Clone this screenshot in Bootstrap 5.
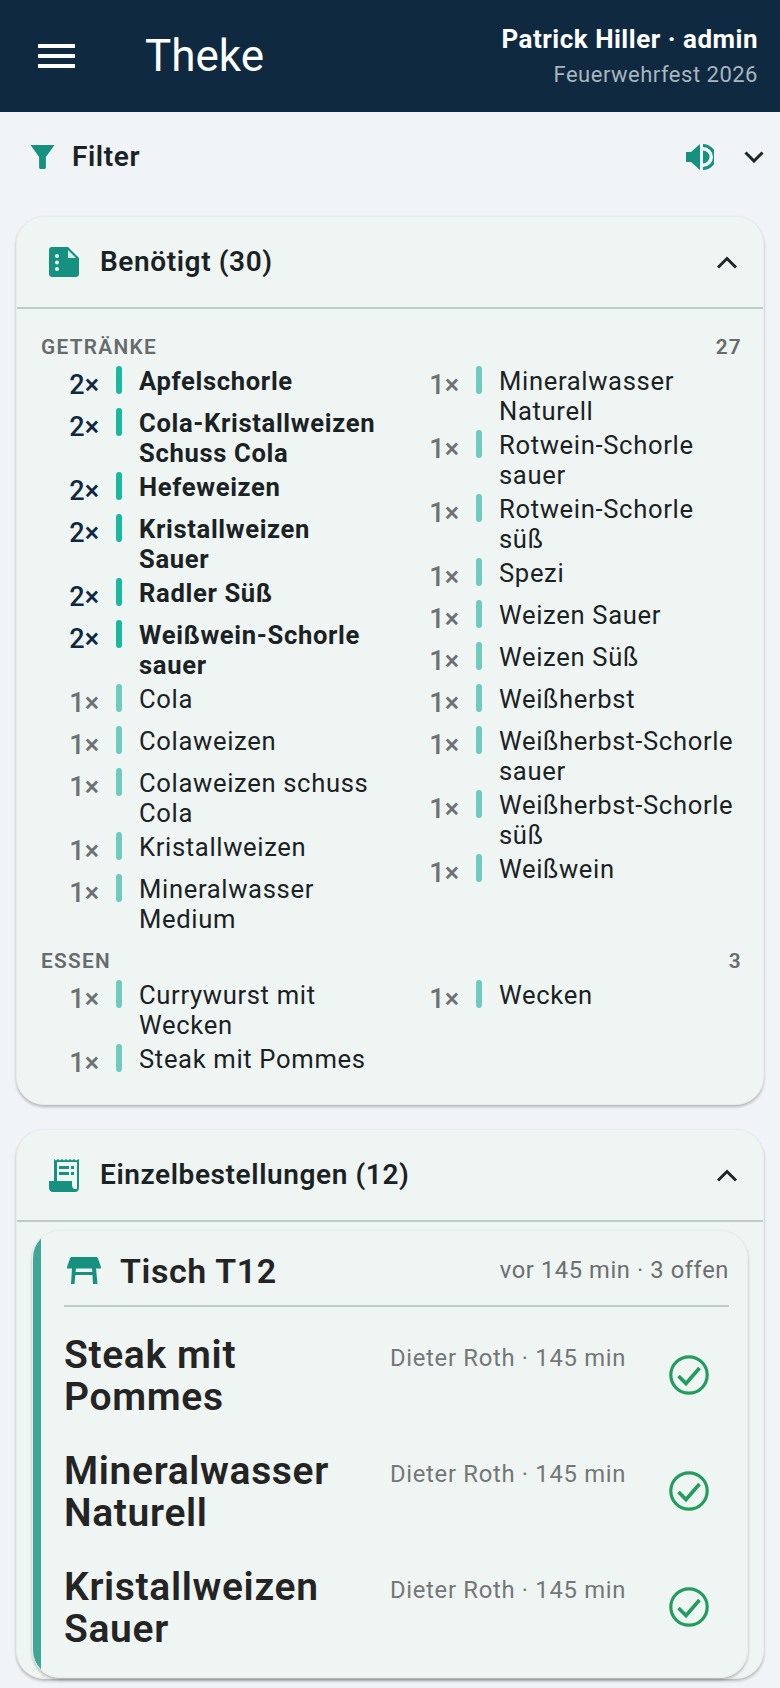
<!DOCTYPE html>
<html lang="de">
<head>
    <meta charset="UTF-8">
    <meta name="viewport" content="width=device-width, initial-scale=1.0">
    <title>Theke</title>
    <link href="https://cdn.jsdelivr.net/npm/bootstrap@5.3.0/dist/css/bootstrap.min.css" rel="stylesheet">
    <style>
        html, body { height: 100%; overflow: hidden; }
        body {
            background-color: #f0f4f7;
            font-family: Roboto, sans-serif;
            color: #1a2224;
            letter-spacing: .66px;
        }
        .app-top { height: 112px; background-color: #0f2a40; color: #fff; padding: 0 22px 0 38px; }
        .burger { width: 37px; height: 24px; }
        .app-title { font-size: 44px; font-weight: 400; margin: 0 0 0 70px; letter-spacing: 0; line-height: 1; }
        .user-name { font-size: 26px; font-weight: 700; line-height: 30px; margin-top: 2px; letter-spacing: .5px; }
        .user-event { font-size: 22px; color: #a9b5bf; line-height: 30px; margin-top: 6px; letter-spacing: .5px; }
        .filter-bar { height: 104px; padding: 0 16px 15px 30px; }
        .filter-text { font-size: 28px; font-weight: 600; margin-left: 17px; letter-spacing: .6px; }
        .panel-box {
            background-color: #eff5f3;
            border: 1px solid #e8edec;
            border-radius: 28px;
            margin: 0 16px 24px;
            box-shadow: 0 2px 3px rgba(0,0,0,.25);
        }
        .panel-head { height: 92px; padding: 0 25px 0 32px; border-bottom: 2px solid #bfcbc7; }
        .panel-title { font-size: 28px; font-weight: 600; margin-left: 21px; letter-spacing: .6px; }
        .panel-body { padding: 27px 21px 6px 24px; }
        .group-label { font-size: 20.8px; font-weight: 600; color: #666b6b; letter-spacing: 1.3px; line-height: 22px; display: flex; justify-content: space-between; margin-bottom: 8px; }
        .order-grid { display: grid; grid-template-columns: 338px 338px; column-gap: 22px; margin-bottom: 12px; }
        .order-line { display: flex; align-items: flex-start; margin-bottom: 4px; min-height: 38px; font-size: 25.6px; line-height: 30px; }
        .order-qty { width: 58px; text-align: right; font-size: 27px; font-weight: 500; color: #6d7173; line-height: 34px; padding-top: 2px; flex-shrink: 0; letter-spacing: 0; }
        .order-bar { width: 6px; height: 28px; border-radius: 3px; background-color: #6fcbbd; margin: 0 17px; flex-shrink: 0; }
        .order-name { width: 240px; }
        .order-line.urgent .order-qty { color: #0f2a40; }
        .order-line.urgent .order-bar { background-color: #1ab8a1; }
        .order-line.urgent .order-name { font-weight: 700; }
        .table-card {
            background: linear-gradient(90deg, #3fa796 8px, #eff5f3 8px);
            border: 1px solid #e8edec;
            border-radius: 28px;
            margin: 8px 15px 0;
            padding: 0 18px 0 31px;
            box-shadow: 0 2px 3px rgba(0,0,0,.25);
            height: 448px;
        }
        .table-head { height: 76px; border-bottom: 2px solid #bfcbc7; padding-top: 6px; }
        .table-icon { margin-left: 3px; }
        .table-name { font-size: 34px; font-weight: 600; color: #242424; margin-left: 19px; letter-spacing: .6px; }
        .table-meta { font-size: 23.7px; color: #6b6f6f; letter-spacing: .6px; }
        .item-row { height: 116px; padding-top: 27px; }
        .item-name { font-size: 39px; line-height: 42px; font-weight: 600; color: #242424; width: 326px; }
        .item-meta { font-size: 23.8px; color: #737777; width: 279px; line-height: 30px; padding-top: 9px; letter-spacing: .7px; }
        .item-check { margin-top: 21px; }
        .chevron-gap { margin-left: 30px; }
    </style>
</head>
<body>
    <header class="app-top d-flex align-items-center justify-content-between">
        <div class="d-flex align-items-center">
            <svg class="burger" viewBox="0 0 37 24"><path fill="#fff" d="M0 0h37v4H0zM0 10h37v4H0zM0 20h37v4H0z"/></svg>
            <h1 class="app-title">Theke</h1>
        </div>
        <div class="text-end">
            <div class="user-name">Patrick Hiller · admin</div>
            <div class="user-event">Feuerwehrfest 2026</div>
        </div>
    </header>

    <div class="filter-bar d-flex align-items-center justify-content-between">
        <div class="d-flex align-items-center">
            <svg width="25" height="25" viewBox="0 0 25 25"><path fill="#17917f" d="M.5 1h24l-8.600 12v10.500c0 .8-.6 1.400-1.400 1.400h-4c-.8 0-1.400-.6-1.400-1.400V13z"/></svg>
            <span class="filter-text">Filter</span>
        </div>
        <div class="d-flex align-items-center">
            <svg width="28" height="28" viewBox="0 0 28 28"><path fill="#17917f" d="M0 9h5l9-8v26l-9-8H0z"/><path fill="#17917f" d="M17 7.500a6.500 6.500 0 0 1 0 13z"/><path fill="none" stroke="#17917f" stroke-width="3" d="M17 2.500a11.500 11.500 0 0 1 0 23"/></svg>
            <svg class="chevron-gap" width="20" height="12" viewBox="0 0 20 12"><path fill="none" stroke="#1f2628" stroke-width="3" d="M1.500 1.500 10 10l8.500-8.500"/></svg>
        </div>
    </div>

    <section class="panel-box">
        <div class="panel-head d-flex align-items-center justify-content-between">
            <div class="d-flex align-items-center">
                <svg width="30" height="30" viewBox="0 0 30 30"><path fill="#17917f" d="M3 0h16l11 11v16c0 1.700-1.300 3-3 3H3c-1.700 0-3-1.300-3-3V3c0-1.700 1.300-3 3-3z"/><path fill="#dcebe8" d="M19 3l8 8h-8z"/><circle cx="8" cy="9" r="2" fill="#eff5f3"/><circle cx="8" cy="15.500" r="2" fill="#eff5f3"/><circle cx="8" cy="22" r="2" fill="#eff5f3"/></svg>
                <span class="panel-title">Benötigt (30)</span>
            </div>
            <svg width="22" height="14" viewBox="0 0 22 14"><path fill="none" stroke="#1f2628" stroke-width="3" d="M2 12.500l9-9 9 9"/></svg>
        </div>
        <div class="panel-body">
            <div class="group-label"><span>GETRÄNKE</span><span>27</span></div>
            <div class="order-grid">
                <div>
                    <div class="order-line urgent"><span class="order-qty">2×</span><span class="order-bar"></span><span class="order-name">Apfelschorle</span></div>
                    <div class="order-line urgent"><span class="order-qty">2×</span><span class="order-bar"></span><span class="order-name">Cola-Kristallweizen Schuss Cola</span></div>
                    <div class="order-line urgent"><span class="order-qty">2×</span><span class="order-bar"></span><span class="order-name">Hefeweizen</span></div>
                    <div class="order-line urgent"><span class="order-qty">2×</span><span class="order-bar"></span><span class="order-name">Kristallweizen Sauer</span></div>
                    <div class="order-line urgent"><span class="order-qty">2×</span><span class="order-bar"></span><span class="order-name">Radler Süß</span></div>
                    <div class="order-line urgent"><span class="order-qty">2×</span><span class="order-bar"></span><span class="order-name">Weißwein-Schorle sauer</span></div>
                    <div class="order-line"><span class="order-qty">1×</span><span class="order-bar"></span><span class="order-name">Cola</span></div>
                    <div class="order-line"><span class="order-qty">1×</span><span class="order-bar"></span><span class="order-name">Colaweizen</span></div>
                    <div class="order-line"><span class="order-qty">1×</span><span class="order-bar"></span><span class="order-name">Colaweizen schuss Cola</span></div>
                    <div class="order-line"><span class="order-qty">1×</span><span class="order-bar"></span><span class="order-name">Kristallweizen</span></div>
                    <div class="order-line"><span class="order-qty">1×</span><span class="order-bar"></span><span class="order-name">Mineralwasser Medium</span></div>
                </div>
                <div>
                    <div class="order-line"><span class="order-qty">1×</span><span class="order-bar"></span><span class="order-name">Mineralwasser Naturell</span></div>
                    <div class="order-line"><span class="order-qty">1×</span><span class="order-bar"></span><span class="order-name">Rotwein-Schorle sauer</span></div>
                    <div class="order-line"><span class="order-qty">1×</span><span class="order-bar"></span><span class="order-name">Rotwein-Schorle süß</span></div>
                    <div class="order-line"><span class="order-qty">1×</span><span class="order-bar"></span><span class="order-name">Spezi</span></div>
                    <div class="order-line"><span class="order-qty">1×</span><span class="order-bar"></span><span class="order-name">Weizen Sauer</span></div>
                    <div class="order-line"><span class="order-qty">1×</span><span class="order-bar"></span><span class="order-name">Weizen Süß</span></div>
                    <div class="order-line"><span class="order-qty">1×</span><span class="order-bar"></span><span class="order-name">Weißherbst</span></div>
                    <div class="order-line"><span class="order-qty">1×</span><span class="order-bar"></span><span class="order-name">Weißherbst-Schorle sauer</span></div>
                    <div class="order-line"><span class="order-qty">1×</span><span class="order-bar"></span><span class="order-name">Weißherbst-Schorle süß</span></div>
                    <div class="order-line"><span class="order-qty">1×</span><span class="order-bar"></span><span class="order-name">Weißwein</span></div>
                </div>
            </div>
            <div class="group-label"><span>ESSEN</span><span>3</span></div>
            <div class="order-grid">
                <div>
                    <div class="order-line"><span class="order-qty">1×</span><span class="order-bar"></span><span class="order-name">Currywurst mit Wecken</span></div>
                    <div class="order-line"><span class="order-qty">1×</span><span class="order-bar"></span><span class="order-name">Steak mit Pommes</span></div>
                </div>
                <div>
                    <div class="order-line"><span class="order-qty">1×</span><span class="order-bar"></span><span class="order-name">Wecken</span></div>
                </div>
            </div>
        </div>
    </section>

    <section class="panel-box">
        <div class="panel-head d-flex align-items-center justify-content-between">
            <div class="d-flex align-items-center">
                <svg width="30" height="34" viewBox="0 0 30 34"><path fill="#17917f" d="M5 1l2 1.500L9 1l2 1.500L13 1l2 1.500L17 1l2 1.500L21 1l2 1.500L25 1l2 1.500L30 1v29c0 2-1.500 4-4 4H4c-2.500 0-4-2-4-4v-7h5z"/><path fill="#eff5f3" d="M8 4h20v19H8z"/><path fill="#eff5f3" d="M23 23h5v8h-2c-2 0-3-2-3-4z"/><path fill="#17917f" d="M10 8h10v3H10zM22 8h3v3h-3zM10 14h10v3H10zM22 14h3v3h-3z"/></svg>
                <span class="panel-title">Einzelbestellungen (12)</span>
            </div>
            <svg width="22" height="14" viewBox="0 0 22 14"><path fill="none" stroke="#1f2628" stroke-width="3" d="M2 12.500l9-9 9 9"/></svg>
        </div>
        <div class="table-card">
            <div class="table-head d-flex align-items-center justify-content-between">
                <div class="d-flex align-items-center">
                    <svg class="table-icon" width="34" height="28" viewBox="0 0 34 28"><path fill="#17917f" d="M5 0h24c1 0 1.500.5 2 1.500L34 10c.3 1-.3 1.500-1 1.500H1c-.7 0-1.300-.5-1-1.500L3 1.500C3.500.5 4 0 5 0z"/><path fill="#17917f" d="M5 11h4l-1.500 16H4zM25 11h4l1.500 16H26zM8 15h18v3H8z"/></svg>
                    <span class="table-name">Tisch T12</span>
                </div>
                <span class="table-meta">vor 145 min · 3 offen</span>
            </div>
            <div class="item-row d-flex">
                <div class="item-name">Steak mit Pommes</div>
                <div class="item-meta">Dieter Roth · 145 min</div>
                <svg class="item-check" width="40" height="40" viewBox="0 0 40 40"><circle cx="20" cy="20" r="18.200" fill="none" stroke="#229d5d" stroke-width="3.200"/><path fill="none" stroke="#229d5d" stroke-width="3.600" d="M9.500 21l7.500 7.500L30.500 13"/></svg>
            </div>
            <div class="item-row d-flex">
                <div class="item-name">Mineralwasser Naturell</div>
                <div class="item-meta">Dieter Roth · 145 min</div>
                <svg class="item-check" width="40" height="40" viewBox="0 0 40 40"><circle cx="20" cy="20" r="18.200" fill="none" stroke="#229d5d" stroke-width="3.200"/><path fill="none" stroke="#229d5d" stroke-width="3.600" d="M9.500 21l7.500 7.500L30.500 13"/></svg>
            </div>
            <div class="item-row d-flex">
                <div class="item-name">Kristallweizen Sauer</div>
                <div class="item-meta">Dieter Roth · 145 min</div>
                <svg class="item-check" width="40" height="40" viewBox="0 0 40 40"><circle cx="20" cy="20" r="18.200" fill="none" stroke="#229d5d" stroke-width="3.200"/><path fill="none" stroke="#229d5d" stroke-width="3.600" d="M9.500 21l7.500 7.500L30.500 13"/></svg>
            </div>
        </div>
    </section>

    <script src="https://cdn.jsdelivr.net/npm/bootstrap@5.3.0/dist/js/bootstrap.bundle.min.js"></script>
</body>
</html>
